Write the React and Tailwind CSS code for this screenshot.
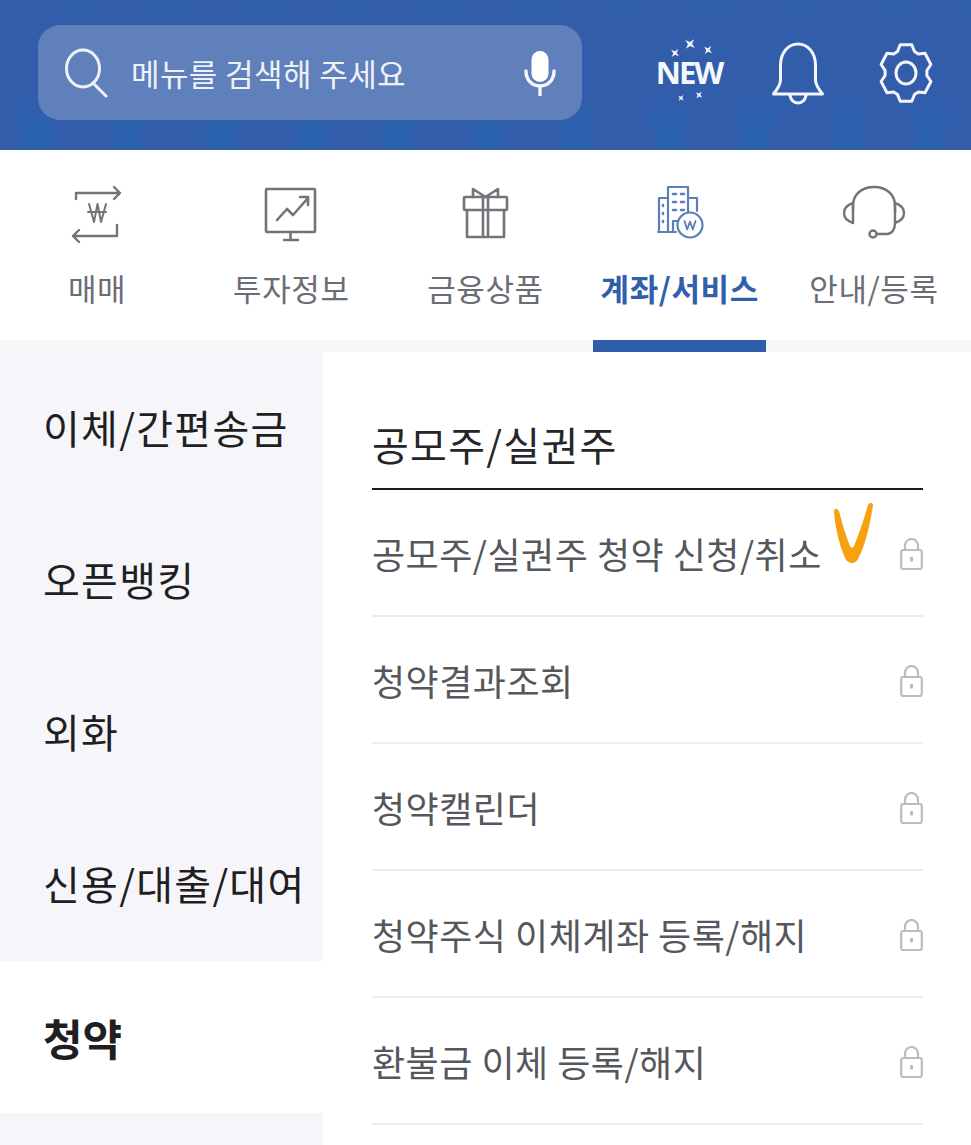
import React from "react";

const font = { fontFamily: '"Noto Sans CJK KR", "Noto Sans", sans-serif' };

const Stroke = ({ children, size, vb = "0 0 60 60", color, sw = 2.6, className = "" }) => (
  <svg width={size} height={size} viewBox={vb} fill="none" stroke={color} strokeWidth={sw} strokeLinecap="round" strokeLinejoin="round" className={className}>
    {children}
  </svg>
);

const Lock = () => (
  <svg width="23" height="32" viewBox="0 0 23 32" fill="none" stroke="#babcc2" strokeWidth="2.2" strokeLinejoin="round" className="mt-[2px]">
    <path d="M5 12V7.5a6.5 6.5 0 0 1 13 0V12" />
    <rect x="1.2" y="12" width="20.6" height="19" rx="2" />
    <path d="M11.5 19v4.5" strokeWidth="3" />
  </svg>
);

const gearPath = () => {
  const cx = 27, cy = 31, rx = 26, ry = 29, inX = 21, inY = 23.5;
  let d = "";
  for (let k = 0; k < 6; k++) {
    const a = -90 + k * 60;
    const pts = [
      [a - 24, inX, inY],
      [a - 13, rx, ry],
      [a + 13, rx, ry],
      [a + 24, inX, inY],
    ];
    pts.forEach(([deg, rX, rY]) => {
      const r = (deg * Math.PI) / 180;
      d += `${d ? "L" : "M"}${(cx + rX * Math.cos(r)).toFixed(1)} ${(cy + rY * Math.sin(r)).toFixed(1)}`;
    });
  }
  return d + "Z";
};

const Star = ({ x, y, s }) => (
  <path
    transform={`translate(${x} ${y}) rotate(40) scale(${s})`}
    d="M0-6 L1.4-1.4 L6 0 L1.4 1.4 L0 6 L-1.4 1.4 L-6 0 L-1.4-1.4Z"
    fill="#eef3fb"
  />
);

const tabs = [
  {
    label: "매매",
    icon: (
      <Stroke size={60} color="#72747a" sw={2.4}>
        <path d="M9 15V9H52M47 3l6 6-6 6" />
        <path d="M50 41v11H7M12 46l-6 6 6 6" />
        <path d="M22 20l5 18 3.500-18 3.500 18 5-18M21 28h18" strokeWidth="2" />
      </Stroke>
    ),
  },
  {
    label: "투자정보",
    icon: (
      <Stroke size={60} color="#72747a">
        <rect x="5" y="5" width="49" height="43" rx="1" />
        <path d="M16 36l10-11 6 6 15-17M39 13h8v8" />
        <path d="M29.500 48v7M23 56h14" />
      </Stroke>
    ),
  },
  {
    label: "금융상품",
    icon: (
      <Stroke size={60} color="#72747a">
        <rect x="9" y="13" width="43" height="13" rx="1" />
        <path d="M12 26v27h37V26M28 13v40M33 13v40" />
        <path d="M30.500 13L18 5v8M30.500 13L43 5v8" />
      </Stroke>
    ),
  },
  {
    label: "계좌/서비스",
    active: true,
    icon: (
      <Stroke size={60} color="#5d7fb8" sw={2.2}>
        <path d="M18 48V3h20v25" />
        <path d="M18 14H9v34M38 14h9v13M8 48h18" />
        <path d="M23 10h3M31 10h3M23 18h3M31 18h3M23 26h3M31 26h3M13 21v1M13 29v1M13 37v1" strokeWidth="2.600" />
        <path d="M23 48V37h5" />
        <circle cx="40" cy="41" r="12.500" fill="#fff" />
        <path d="M34.500 37l2.700 8.500 2.800-8 2.800 8 2.700-8.500" strokeWidth="1.800" />
      </Stroke>
    ),
  },
  {
    label: "안내/등록",
    icon: (
      <Stroke size={64} vb="0 0 64 64" color="#72747a" sw={2.4}>
        <path d="M11 30V24C11 12 20 5 32 5s21 7 21 19v6" />
        <path d="M11 21C5 23 2 27 2 31c0 4 3 8 9 10zM53 21c6 2 9 6 9 10 0 4-3 8-9 10z" />
        <path d="M53 41c0 6-3 11-8 11H35" />
        <circle cx="31" cy="52" r="3.500" />
      </Stroke>
    ),
  },
];

const side = ["이체/간편송금", "오픈뱅킹", "외화", "신용/대출/대여", "청약", ""];
const rows = ["공모주/실권주 청약 신청/취소", "청약결과조회", "청약캘린더", "청약주식 이체계좌 등록/해지", "환불금 이체 등록/해지"];
const wedges = [37, 127, 220, 310, 396, 489, 576, 669, 755, 848, 929];

export default function App() {
  return (
    <div style={font} className="relative w-[971px] h-[1145px] overflow-hidden bg-white">
      <header className="relative h-[150px] bg-[#325dab] flex items-center pl-[38px] pb-[5px]">
        <svg width="971" height="150" viewBox="0 0 971 150" className="absolute left-0 top-0">
          <defs>
            <linearGradient id="wedgeFade" x1="0" y1="0" x2="0" y2="1">
              <stop offset="0" stopColor="#2b62ae" stopOpacity="0" />
              <stop offset="0.6" stopColor="#2b62ae" stopOpacity="1" />
            </linearGradient>
            <linearGradient id="wedgeTop" x1="0" y1="0" x2="0" y2="1">
              <stop offset="0" stopColor="#2f60ac" stopOpacity="0.7" />
              <stop offset="1" stopColor="#2f60ac" stopOpacity="0" />
            </linearGradient>
          </defs>
          {wedges.map((x) => (
            <polygon key={x} points={`${x - 24},95 ${x + 24},95 ${x + 11},150 ${x - 11},150`} fill="url(#wedgeFade)" />
          ))}
          {wedges.map((x) => (
            <polygon key={`t${x}`} points={`${x + 21},0 ${x + 69},0 ${x + 56},30 ${x + 34},30`} fill="url(#wedgeTop)" />
          ))}
        </svg>
        <div className="relative w-[544px] h-[95px] rounded-[22px] bg-[#5f80ba] flex items-center pl-[26px] pr-[26px]">
          <svg width="44" height="50" viewBox="0 0 44 50" fill="none" stroke="#eef2f8" strokeWidth="3" strokeLinecap="round" className="mr-[23px]">
            <ellipse cx="19" cy="20.500" rx="16.500" ry="18.500" />
            <path d="M29 35l13 13" />
          </svg>
          <span className="text-[31px] text-[#eef2f8] tracking-[0.4px] flex-1 leading-[46px]">메뉴를 검색해 주세요</span>
          <svg width="32" height="46" viewBox="0 0 32 46" fill="none" stroke="#f4f6fb" strokeWidth="3.400" strokeLinecap="round">
            <rect x="7.500" y="1" width="17" height="31" rx="8.500" fill="#ffffff" stroke="none" />
            <path d="M2 21c0 9 6 15 14 15s14-6 14-15M16 36v9" />
          </svg>
        </div>
        <div className="relative w-[70px] h-[70px] ml-[72px] flex items-center justify-center">
          <svg width="70" height="70" viewBox="0 0 70 70" className="absolute left-0 top-0">
            <Star x={36} y={6} s={1.05} />
            <Star x={21} y={15} s={0.85} />
            <Star x={54} y={12} s={0.85} />
            <Star x={27} y={60} s={0.65} />
            <Star x={45} y={57} s={0.7} />
          </svg>
          <span className="relative text-[31px] font-bold text-[#f4f7fc] leading-none tracking-[-2px]" style={{ fontFamily: '"Open Sans", sans-serif' }}>NEW</span>
        </div>
        <svg width="54" height="63" viewBox="0 0 54 63" fill="none" stroke="#f4f6fb" strokeWidth="3" strokeLinejoin="round" className="relative ml-[47px] mt-[2px]">
          <path d="M2.500 52c4-5 7-9 7-14V23C9.500 11 17 2 27 2s17.500 9 17.500 21v15c0 5 3 9 7 14z" />
          <path d="M19 52c0 6 4 9 8 9s8-3 8-9" />
        </svg>
        <svg width="54" height="62" viewBox="0 0 54 62" fill="none" stroke="#f4f6fb" strokeWidth="3" strokeLinejoin="round" className="relative ml-[54px]">
          <path d={gearPath()} />
          <ellipse cx="27" cy="31" rx="10" ry="11" />
        </svg>
      </header>

      <nav className="grid grid-cols-5 h-[190px] bg-white">
        {tabs.map((t) => (
          <div key={t.label} className="flex flex-col items-center">
            <div className="h-[64px] mt-[32px] flex items-center justify-center">{t.icon}</div>
            <span className={`mt-[19px] text-[31px] leading-[46px] whitespace-nowrap ${t.active ? "font-bold text-[#315fa9] tracking-[0.6px]" : "text-[#6a6d73] tracking-[0.6px]"}`}>
              {t.label}
            </span>
          </div>
        ))}
      </nav>
      <div className="grid grid-cols-5 h-[12px] bg-[#f6f6f7]">
        <div className="col-start-4 flex justify-center">
          <div className="w-[173px] h-[12px] bg-[#2f5dab]" />
        </div>
      </div>

      <div className="flex h-[793px]">
        <aside className="w-[323px] shrink-0 bg-[#f6f6fa] flex flex-col">
          {side.map((s, i) => (
            <div
              key={i}
              className={`h-[152.2px] shrink-0 flex items-center pl-[43px] whitespace-nowrap text-[#1f1f22] ${s === "청약" ? "bg-white font-bold text-[43px]" : "pb-[3px] text-[40px] tracking-[1.3px]"}`}
            >
              {s}
            </div>
          ))}
        </aside>
        <main className="flex-1 pl-[49px] pr-[48px]">
          <div className="h-[138px] border-b-2 border-[#1c1c1f] flex items-end pb-[15px] text-[40px] leading-[58px] tracking-[1.3px] text-[#26262a]">
            공모주/실권주
          </div>
          {rows.map((r) => (
            <div key={r} className="h-[127px] border-b-2 border-[#ececee] flex items-center justify-between">
              <span className="text-[36px] text-[#55575c] whitespace-nowrap tracking-[0.5px]">{r}</span>
              <Lock />
            </div>
          ))}
        </main>
      </div>

      <svg width="44" height="64" viewBox="0 0 44 64" fill="none" className="absolute left-[832px] top-[502px]">
        <path d="M2 10c1 14 5 32 11 46 3 6 10 7 13 1C33 44 38 24 41 3c-1-3-3-3-5 0-4 14-9 29-14 41-1 2-3 2-4 0C13 32 10 20 7 9 4 5 2 7 2 10z" fill="#f7a111" />
      </svg>
    </div>
  );
}
